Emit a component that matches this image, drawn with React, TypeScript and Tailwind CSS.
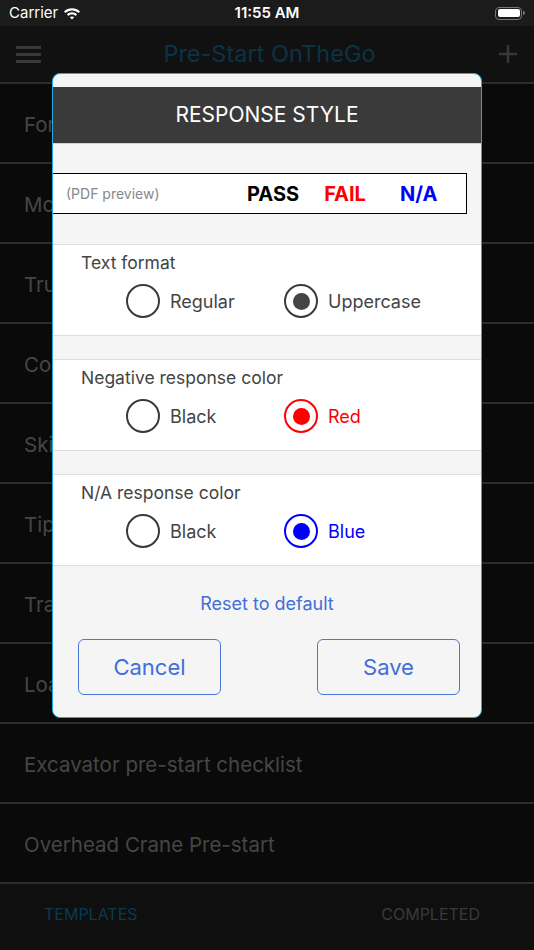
import React from 'react';

const rows = [
  'Forklift pre-start checklist',
  'Mobile plant pre-start',
  'Truck pre-start checklist',
  'Concrete pump pre-start',
  'Skid steer pre-start',
  'Tipper truck pre-start',
  'Tractor pre-start checklist',
  'Loader pre-start checklist',
  'Excavator pre-start checklist',
  'Overhead Crane Pre-start',
];

type RadioProps = { label: string; checked?: boolean; tone?: 'gray' | 'red' | 'blue' };

const Radio: React.FC<RadioProps> = ({ label, checked, tone = 'gray' }) => {
  const ring =
    tone === 'red' ? 'border-[#ff0000]' : tone === 'blue' ? 'border-[#0000ff]' : 'border-[#3a3a3a]';
  const dot = tone === 'red' ? 'bg-[#ff0000]' : tone === 'blue' ? 'bg-[#0000ff]' : 'bg-[#454545]';
  const text = checked && tone === 'red' ? 'text-[#ff0000]' : checked && tone === 'blue' ? 'text-[#0000ff]' : 'text-[#444]';
  return (
    <div className="flex items-center gap-[10px]">
      <div className={`w-[34px] h-[34px] rounded-full border-[2.5px] flex items-center justify-center ${checked ? ring : 'border-[#3a3a3a]'}`}>
        {checked && <div className={`w-[17px] h-[17px] rounded-full ${dot}`} />}
      </div>
      <span className={`text-[18px] ${text}`}>{label}</span>
    </div>
  );
};

const Section: React.FC<{ title: string; a: RadioProps; b: RadioProps }> = ({ title, a, b }) => (
  <div className="bg-white border-y border-[#dedede] h-[92px] pt-[6px]">
    <div className="pl-[28px] text-[17.5px] text-[#444] leading-[24px]">{title}</div>
    <div className="flex pl-[73px] mt-[9px]">
      <div className="w-[158px]">
        <Radio {...a} />
      </div>
      <Radio {...b} />
    </div>
  </div>
);

const App: React.FC = () => {
  return (
    <div className="relative w-[534px] h-[950px] overflow-hidden bg-[#0a0a0a]" style={{ fontFamily: 'Inter, "Liberation Sans", sans-serif' }}>
      {/* status bar */}
      <div className="h-[26px] bg-[#1b1b1b] flex items-center justify-between px-[9px] text-white text-[15px]">
        <div className="flex items-center gap-[5px] w-[120px]">
          <span>Carrier</span>
          <svg width="18" height="13" viewBox="0 0 18 13" fill="white">
            <path d="M9 1.2c3.1 0 5.9 1.2 8 3.2l-1.5 1.6C13.8 4.4 11.5 3.4 9 3.4S4.2 4.4 2.5 6L1 4.4c2.1-2 4.9-3.2 8-3.2z" />
            <path d="M9 5.3c2 0 3.8.8 5.1 2L12.6 8.9c-.9-.9-2.2-1.4-3.6-1.4s-2.7.5-3.6 1.4L3.9 7.3c1.3-1.2 3.1-2 5.1-2z" />
            <path d="M9 9.4c.9 0 1.6.3 2.2.9L9 12.6l-2.2-2.3c.6-.6 1.3-.9 2.2-.9z" />
          </svg>
        </div>
        <span className="font-semibold">11:55 AM</span>
        <div className="w-[120px] flex justify-end items-center">
          <div className="w-[27px] h-[13px] rounded-[4px] border border-[#777] p-[1.5px]">
            <div className="w-full h-full bg-white rounded-[2px]" />
          </div>
          <div className="w-[2px] h-[4px] bg-[#777] ml-[1px] rounded-r" />
        </div>
      </div>

      {/* nav bar */}
      <div className="h-[58px] bg-[#111] border-b-2 border-[#2c2c2c] flex items-center justify-between px-[16px]">
        <div className="flex flex-col gap-[4px] w-[25px]">
          <div className="h-[3px] bg-[#383838]" />
          <div className="h-[3px] bg-[#383838]" />
          <div className="h-[3px] bg-[#383838]" />
        </div>
        <span className="text-[23.5px] text-[#0a3446]">Pre-Start OnTheGo</span>
        <svg width="20" height="20" viewBox="0 0 20 20" stroke="#383838" strokeWidth="2.5">
          <path d="M10 1v18M1 10h18" />
        </svg>
      </div>

      {/* list */}
      <div>
        {rows.map((r) => (
          <div key={r} className="h-[80px] border-b-2 border-[#2c2c2c] flex items-center pl-[24px] pt-[4px] text-[20.5px] text-[#464646]">
            {r}
          </div>
        ))}
      </div>

      {/* tab bar */}
      <div className="h-[66px] bg-[#0f0f0f] flex items-start pt-[18px] text-[16px]">
        <span className="ml-[44px] text-[#0b3a50]">TEMPLATES</span>
        <span className="ml-auto mr-[54px] text-[#3a3a3a]">COMPLETED</span>
      </div>

      {/* modal */}
      <div className="absolute left-[52px] top-[73px] w-[430px] h-[645px] bg-[#f5f5f5] border-[1.5px] border-[#1aade8] rounded-[8px] overflow-hidden">
        <div className="h-[13px]" />
        <div className="h-[57px] bg-[#3a3a3a] border-b border-[#cfcfcf] flex items-center justify-center text-white text-[21px]">
          RESPONSE STYLE
        </div>
        <div className="h-[29px]" />
        <div className="w-[414px] h-[41px] bg-white border border-l-0 border-black flex items-center">
          <span className="ml-[13px] w-[170px] text-[14px] text-[#888]">(PDF preview)</span>
          <span className="ml-[11px] text-[20px] font-bold text-black">PASS</span>
          <span className="ml-[25px] text-[20px] font-bold text-[#ff0000]">FAIL</span>
          <span className="ml-[34px] text-[20px] font-bold text-[#0000ff]">N/A</span>
        </div>
        <div className="h-[30px]" />
        <Section title="Text format" a={{ label: 'Regular' }} b={{ label: 'Uppercase', checked: true }} />
        <div className="h-[23px]" />
        <Section title="Negative response color" a={{ label: 'Black' }} b={{ label: 'Red', checked: true, tone: 'red' }} />
        <div className="h-[23px]" />
        <Section title="N/A response color" a={{ label: 'Black' }} b={{ label: 'Blue', checked: true, tone: 'blue' }} />
        <div className="text-center text-[18px] text-[#3f6fd8] mt-[24px]">Reset to default</div>
        <div className="flex justify-between pl-[25px] pr-[21px] mt-[22px]">
          <button className="w-[143px] h-[56px] rounded-[6px] border-[1.5px] border-[#4a78dc] text-[22px] text-[#3f6fd8]">Cancel</button>
          <button className="w-[143px] h-[56px] rounded-[6px] border-[1.5px] border-[#4a78dc] text-[22px] text-[#3f6fd8]">Save</button>
        </div>
      </div>
    </div>
  );
};

export default App;
